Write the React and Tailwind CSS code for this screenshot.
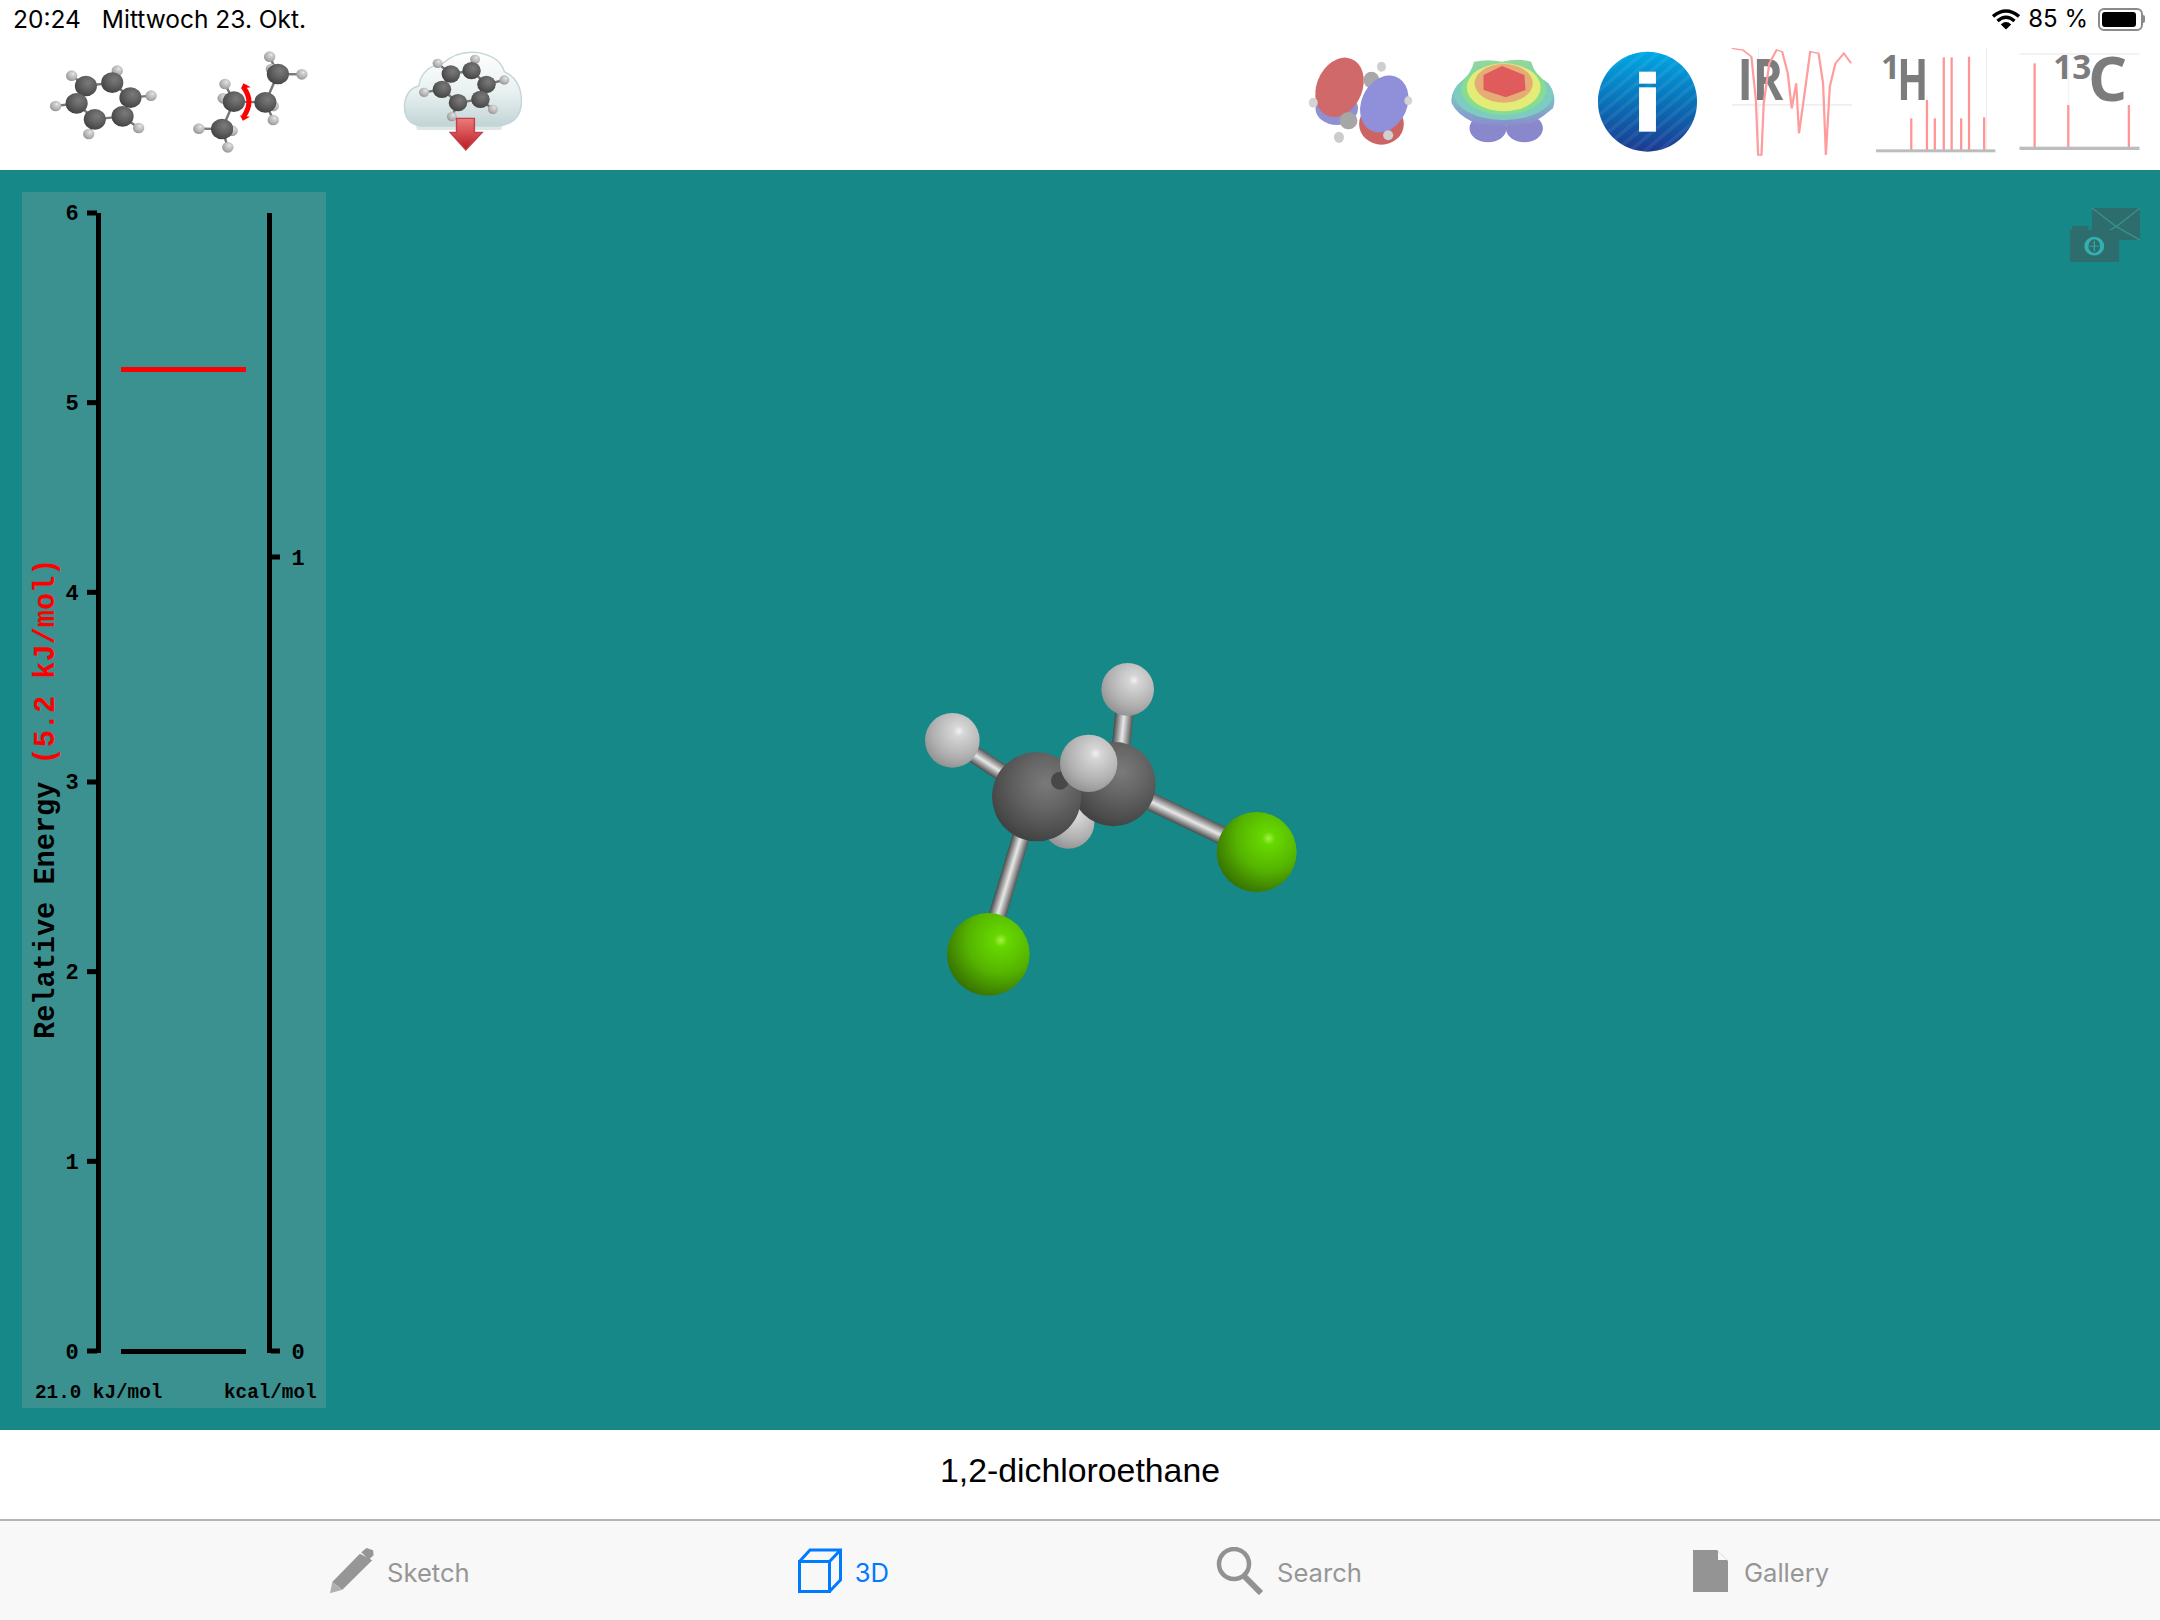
import React from 'react';

const TICKS_KJ = [0, 1, 2, 3, 4, 5, 6];
const Y_ZERO = 1351;
const KJ_STEP = 189.67;

// shared gradients for all the ball and stick drawings
function Gradients() {
  return (
    <svg className="absolute w-0 h-0">
      <defs>
        <radialGradient id="ballC" cx="0.6" cy="0.35" r="0.78">
          <stop offset="0" stopColor="#7a7a7a" />
          <stop offset="0.35" stopColor="#666666" />
          <stop offset="0.7" stopColor="#4e4e4e" />
          <stop offset="1" stopColor="#363636" />
        </radialGradient>
        <radialGradient id="ballH" cx="0.62" cy="0.33" r="0.8">
          <stop offset="0" stopColor="#f2f2f2" />
          <stop offset="0.12" stopColor="#d6d6d6" />
          <stop offset="0.6" stopColor="#b0b0b0" />
          <stop offset="1" stopColor="#868686" />
        </radialGradient>
        <radialGradient id="ballCl" cx="0.65" cy="0.33" r="0.8">
          <stop offset="0" stopColor="#a4f048" />
          <stop offset="0.1" stopColor="#66d800" />
          <stop offset="0.5" stopColor="#55b400" />
          <stop offset="0.8" stopColor="#3f8200" />
          <stop offset="1" stopColor="#2f6600" />
        </radialGradient>
        <linearGradient id="cloudFill" x1="0" y1="0" x2="0" y2="1">
          <stop offset="0" stopColor="#ffffff" />
          <stop offset="0.55" stopColor="#e8f0f0" />
          <stop offset="1" stopColor="#c2d4d6" />
        </linearGradient>
        <linearGradient id="arrowFill" x1="0" y1="0" x2="0" y2="1">
          <stop offset="0" stopColor="#ee7a7a" />
          <stop offset="1" stopColor="#b81c24" />
        </linearGradient>
        <linearGradient id="infoFill" x1="0" y1="0" x2="0" y2="1">
          <stop offset="0" stopColor="#00a8e4" />
          <stop offset="0.55" stopColor="#0a6cb4" />
          <stop offset="1" stopColor="#1c3a90" />
        </linearGradient>
        <linearGradient id="espBase" x1="0" y1="0" x2="0" y2="1">
          <stop offset="0" stopColor="#92d89a" />
          <stop offset="0.5" stopColor="#7cc8c4" />
          <stop offset="1" stopColor="#8a8ecc" />
        </linearGradient>
      </defs>
    </svg>
  );
}

function Bond({ x1, y1, x2, y2, w, id }) {
  const len = Math.hypot(x2 - x1, y2 - y1);
  const nx = (-(y2 - y1) / len) * (w / 2);
  const ny = ((x2 - x1) / len) * (w / 2);
  return (
    <>
      <defs>
        <linearGradient id={id} gradientUnits="userSpaceOnUse" x1={x1 + nx} y1={y1 + ny} x2={x1 - nx} y2={y1 - ny}>
          <stop offset="0" stopColor="#4a4a4a" />
          <stop offset="0.5" stopColor="#e8e8e8" />
          <stop offset="1" stopColor="#555555" />
        </linearGradient>
      </defs>
      <line x1={x1} y1={y1} x2={x2} y2={y2} stroke={`url(#${id})`} strokeWidth={w} />
    </>
  );
}

function Molecule() {
  return (
    <svg className="absolute left-[900px] top-[470px]" width="420" height="380" viewBox="0 0 1260 1140">
      <Bond id="b1" x1={157} y1={301} x2={340} y2={420} w={52} />
      <circle cx="157" cy="301" r="82" fill="url(#ballH)" />
      <Bond id="b2" x1={680} y1={148} x2={655} y2={400} w={55} />
      <circle cx="683" cy="148" r="79" fill="url(#ballH)" />
      <circle cx="505" cy="548" r="78" fill="url(#ballH)" />
      <Bond id="b3" x1={700} y1={460} x2={1070} y2={636} w={55} />
      <circle cx="640" cy="432" r="127" fill="url(#ballC)" />
      <circle cx="1070" cy="636" r="120" fill="url(#ballCl)" />
      <Bond id="b4" x1={390} y1={500} x2={270} y2={900} w={52} />
      <circle cx="410" cy="470" r="134" fill="url(#ballC)" />
      <circle cx="480" cy="422" r="27" fill="#484848" />
      <circle cx="566" cy="370" r="86" fill="url(#ballH)" />
      <circle cx="265" cy="943" r="124" fill="url(#ballCl)" />
    </svg>
  );
}

function EnergyChart() {
  const mono = { fontFamily: '"Liberation Mono", monospace', fontWeight: 700 };
  return (
    <svg className="w-full h-full" viewBox="22 192 304 1216">
      <rect x="96" y="213" width="5" height="1140" fill="#000" />
      <rect x="267" y="213" width="5" height="1140" fill="#000" />
      {TICKS_KJ.map((t) => {
        const y = Y_ZERO - t * KJ_STEP;
        return (
          <g key={t}>
            <rect x="87" y={y - 2.5} width="10" height="5" fill="#000" />
            <text x="72" y={y + 7.5} textAnchor="middle" fontSize="22" style={mono}>{t}</text>
          </g>
        );
      })}
      <rect x="271" y="554.5" width="9" height="5" fill="#000" />
      <text x="298" y="564.5" textAnchor="middle" fontSize="22" style={mono}>1</text>
      <rect x="271" y="1348.5" width="9" height="5" fill="#000" />
      <text x="298" y="1358.5" textAnchor="middle" fontSize="22" style={mono}>0</text>
      <rect x="121" y="367" width="125" height="5" fill="#ff0000" />
      <rect x="121" y="1349" width="125" height="5" fill="#000" />
      <text x="35" y="1398" fontSize="19.3" style={mono}>21.0 kJ/mol</text>
      <text x="224" y="1398" fontSize="19.3" style={mono}>kcal/mol</text>
      <text transform="translate(53.5 1039) rotate(-90)" fontSize="28.6" style={mono}>
        Relative Energy <tspan fill="#ff0000">(5.2 kJ/mol)</tspan>
      </text>
    </svg>
  );
}

// small molecule drawing, coordinates are in the same stretched units as the viewBox
function MiniAtoms({ bonds, carbons, hydrogens, rc = 31, rh = 16 }) {
  return (
    <>
      {bonds.map((b, i) => (
        <line key={i} x1={b[0]} y1={b[1]} x2={b[2]} y2={b[3]} stroke="#777" strokeWidth="7" />
      ))}
      {hydrogens.map((a, i) => (
        <ellipse key={i} cx={a[0]} cy={a[1]} rx={rh} ry={rh} fill="url(#ballH)" />
      ))}
      {carbons.map((a, i) => (
        <ellipse key={i} cx={a[0]} cy={a[1]} rx={rc} ry={rc} fill="url(#ballC)" />
      ))}
    </>
  );
}

const ring = (c, h) => {
  const bonds = [];
  c.forEach((p, i) => {
    const n = c[(i + 1) % c.length];
    bonds.push([p[0], p[1], n[0], n[1]]);
    bonds.push([p[0], p[1], h[i][0], h[i][1]]);
  });
  return bonds;
};

const BENZ_C = [[242, 258], [316, 248], [367, 293], [345, 349], [267, 358], [216, 310]];
const BENZ_H = [[202, 227], [330, 212], [425, 287], [390, 384], [250, 402], [157, 318]];
const CLOUD_C = [[1262, 222], [1320, 212], [1362, 253], [1345, 298], [1282, 308], [1237, 268]];
const CLOUD_H = [[1225, 190], [1330, 178], [1412, 240], [1380, 328], [1265, 350], [1187, 277]];

function BenzeneIcon() {
  return (
    <svg width="114" height="110" viewBox="130 141 320 330" preserveAspectRatio="none">
      <MiniAtoms bonds={ring(BENZ_C, BENZ_H)} carbons={BENZ_C} hydrogens={BENZ_H} />
    </svg>
  );
}

function RotateIcon() {
  const c = [[655, 305], [743, 307], [622, 387], [778, 222]];
  const h = [[630, 252], [625, 295], [557, 386], [650, 392], [638, 442], [755, 170], [760, 207], [845, 223], [765, 360], [765, 318]];
  const bonds = [
    [655, 305, 743, 307], [655, 305, 622, 387], [743, 307, 778, 222],
    [622, 387, 557, 386], [622, 387, 650, 392], [622, 387, 638, 442],
    [778, 222, 755, 170], [778, 222, 760, 207], [778, 222, 845, 223],
    [743, 307, 765, 360], [743, 307, 765, 318], [655, 305, 630, 252], [655, 305, 625, 295],
  ];
  return (
    <svg width="118" height="110" viewBox="535 141 330 330" preserveAspectRatio="none">
      <MiniAtoms bonds={bonds} carbons={c} hydrogens={h} />
      <path d="M682 262 Q712 305 682 350" fill="none" stroke="#ff0000" strokeWidth="14" />
      <polygon points="674,266 682,250 702,262" fill="#ff0000" />
      <polygon points="672,346 680,362 700,350" fill="#ff0000" />
    </svg>
  );
}

function CloudIcon() {
  return (
    <svg width="123" height="110" viewBox="1125 141 345 330" preserveAspectRatio="none">
      <rect x="1165" y="376" width="240" height="14" rx="6" fill="#dfe6e6" />
      <path
        d="M1175 378 Q1130 370 1132 315 Q1136 268 1172 258 Q1180 200 1240 190 Q1280 150 1340 158 Q1400 170 1412 215 Q1462 240 1460 310 Q1455 372 1395 378 Z"
        fill="url(#cloudFill)"
        stroke="#c4d6d8"
        strokeWidth="4"
      />
      <MiniAtoms bonds={ring(CLOUD_C, CLOUD_H)} carbons={CLOUD_C} hydrogens={CLOUD_H} rc={26} rh={14} />
      <polygon
        points="1278,355 1328,355 1328,397 1350,397 1304,450 1260,397 1278,397"
        fill="url(#arrowFill)"
        stroke="#c2404a"
        strokeWidth="4"
      />
    </svg>
  );
}

function OrbitalIcon() {
  return (
    <svg width="109" height="110" viewBox="45 141 195 330" preserveAspectRatio="none">
      <ellipse cx="100" cy="325" rx="38" ry="50" fill="#8f8fd4" />
      <ellipse cx="180" cy="372" rx="40" ry="62" fill="#cc6464" />
      <ellipse cx="105" cy="262" rx="42" ry="90" fill="#d06a6a" transform="rotate(8 105 262)" />
      <ellipse cx="180" cy="200" rx="8" ry="15" fill="#cfcfcf" />
      <ellipse cx="162" cy="240" rx="14" ry="25" fill="#a8a8a8" />
      <ellipse cx="185" cy="312" rx="42" ry="86" fill="#9090da" transform="rotate(8 185 312)" />
      <ellipse cx="121" cy="362" rx="16" ry="26" fill="#a6a6a6" />
      <ellipse cx="58" cy="308" rx="8" ry="15" fill="#d4d4d4" />
      <ellipse cx="228" cy="302" rx="7" ry="13" fill="#d4d4d4" />
      <ellipse cx="104" cy="412" rx="9" ry="17" fill="#cccccc" />
      <ellipse cx="192" cy="406" rx="9" ry="15" fill="#d0d0d0" />
    </svg>
  );
}

function PotentialIcon() {
  return (
    <svg width="112" height="110" viewBox="295 141 200 330" preserveAspectRatio="none">
      <ellipse cx="370" cy="385" rx="33" ry="42" fill="#8a88cc" />
      <ellipse cx="435" cy="385" rx="33" ry="42" fill="#8a88cc" />
      <path
        d="M345 185 Q370 176 395 185 Q425 174 447 185 Q455 230 478 250 Q494 290 486 325 Q468 352 450 368 Q400 384 345 368 Q315 345 305 310 Q302 270 325 240 Q340 220 345 185 Z"
        fill="url(#espBase)"
      />
      <ellipse cx="398" cy="284" rx="88" ry="76" fill="#7ccdc0" />
      <ellipse cx="398" cy="268" rx="76" ry="76" fill="#86dc90" />
      <ellipse cx="398" cy="262" rx="66" ry="72" fill="#e4ec78" />
      <ellipse cx="398" cy="250" rx="52" ry="58" fill="#e6ac76" />
      <polygon points="362,225 395,198 435,225 437,270 402,292 362,270" fill="#e05c5c" />
    </svg>
  );
}

function InfoIcon() {
  return (
    <svg width="107" height="110" viewBox="560 141 190 330" preserveAspectRatio="none">
      <defs>
        <pattern id="infoStripes" width="26" height="44" patternUnits="userSpaceOnUse" patternTransform="skewX(-35)">
          <rect width="10" height="44" fill="#ffffff" fillOpacity="0.07" />
        </pattern>
      </defs>
      <ellipse cx="655" cy="305" rx="88" ry="150" fill="url(#infoFill)" />
      <ellipse cx="655" cy="305" rx="88" ry="150" fill="url(#infoStripes)" />
      <rect x="640" y="215" width="30" height="36" fill="#ffffff" />
      <rect x="640" y="262" width="30" height="133" fill="#ffffff" />
    </svg>
  );
}

// the viewBox is squeezed in x, sx flattens the labels back
function SpectrumLabel({ x, y, size, sx = 0.594, children }) {
  return (
    <text
      transform={`translate(${x} ${y}) scale(${sx} 1)`}
      fontSize={size}
      fontWeight="700"
      fill="#7c7c7c"
      style={{ fontFamily: '"Open Sans", sans-serif' }}
    >
      {children}
    </text>
  );
}

function IrIcon() {
  return (
    <svg className="overflow-visible" width="126" height="110" viewBox="800 141 225 330" preserveAspectRatio="none">
      <rect x="805" y="312" width="215" height="5" fill="#eeeeee" />
      <rect x="852" y="145" width="2" height="320" fill="#f0f0f0" />
      <SpectrumLabel x={815} y={300} size={172} sx={0.48}>IR</SpectrumLabel>
      <polyline
        points="805,145 825,150 840,170 848,300 852,465 858,465 862,310 872,190 885,150 895,155 905,220 912,325 920,250 925,400 935,280 945,155 960,160 968,250 973,465 980,260 990,190 1005,160 1018,190"
        fill="none"
        stroke="#ff9c9c"
        strokeWidth="4"
      />
    </svg>
  );
}

function ProtonIcon() {
  const peaks = [[1125, 355], [1153, 300], [1167, 355], [1183, 172], [1197, 172], [1214, 355], [1228, 170], [1255, 352]];
  return (
    <svg className="overflow-visible" width="129" height="110" viewBox="1055 141 230 330" preserveAspectRatio="none">
      <rect x="1258" y="145" width="2" height="307" fill="#eeeeee" />
      <SpectrumLabel x={1071} y={238} size={100}>1</SpectrumLabel>
      <SpectrumLabel x={1100} y={300} size={172} sx={0.42}>H</SpectrumLabel>
      {peaks.map((p) => (
        <rect key={p[0]} x={p[0] - 2} y={p[1]} width="4" height={452 - p[1]} fill="#ff9494" />
      ))}
      <rect x="1062" y="448" width="213" height="9" fill="#bdbdbd" />
    </svg>
  );
}

function CarbonIcon() {
  const peaks = [[1345, 190], [1405, 315], [1513, 315]];
  return (
    <svg className="overflow-visible" width="129" height="110" viewBox="1310 141 230 330" preserveAspectRatio="none">
      <rect x="1318" y="160" width="214" height="4" fill="#eeeeee" />
      <rect x="1404" y="165" width="2" height="150" fill="#f2f2f2" />
      <SpectrumLabel x={1378} y={238} size={100}>13</SpectrumLabel>
      <SpectrumLabel x={1440} y={302} size={185}>C</SpectrumLabel>
      {peaks.map((p) => (
        <rect key={p[0]} x={p[0] - 2} y={p[1]} width="4" height={445 - p[1]} fill="#ff9494" />
      ))}
      <rect x="1318" y="440" width="214" height="10" fill="#bdbdbd" />
    </svg>
  );
}

function CameraMailIcon() {
  return (
    <svg className="absolute right-[20px] top-[38px]" width="70" height="54" viewBox="1408 625 124 160" preserveAspectRatio="none">
      <rect x="1447" y="625" width="85" height="95" fill="#2e6d6d" />
      <path d="M1447 625 L1490 680 L1532 625 M1447 720 L1490 680 L1532 720" fill="none" stroke="#3a9090" strokeWidth="3" />
      <rect x="1408" y="690" width="87" height="95" fill="#2e6d6d" />
      <rect x="1412" y="678" width="28" height="14" fill="#2e6d6d" />
      <ellipse cx="1451" cy="738" rx="14" ry="24" fill="none" stroke="#35b0b0" strokeWidth="7" />
      <path d="M1451 722 V754 M1442 738 H1460" stroke="#35b0b0" strokeWidth="2" />
    </svg>
  );
}

function WifiIcon() {
  return (
    <svg width="28" height="21" viewBox="0 0 28 21">
      <path d="M1 7.5 Q14 -3.5 27 7.5" fill="none" stroke="#000" strokeWidth="3.4" />
      <path d="M5.5 12 Q14 4.5 22.5 12" fill="none" stroke="#000" strokeWidth="3.4" />
      <path d="M14 20.5 L8.8 15.4 Q14 10.8 19.2 15.4 Z" fill="#000" />
    </svg>
  );
}

function TabItem({ label, active, gap = 'gap-[13px]', children }) {
  return (
    <div className={`flex items-center ${gap}`}>
      {children}
      <span className={`pt-[4px] text-[25.6px] leading-none ${active ? 'text-[#007aff]' : 'text-[#969696]'}`}>{label}</span>
    </div>
  );
}

export default function App() {
  return (
    <div className="relative w-[2160px] h-[1620px] bg-white overflow-hidden font-['Inter',sans-serif]">
      <Gradients />

      {/* Status bar */}
      <div className="flex items-center h-[38px] pl-[13px] pr-[15px] text-[24px] text-black">
        <span className="text-[24.5px]">20:24</span>
        <span className="ml-[21px] text-[24.5px]">Mittwoch 23. Okt.</span>
        <div className="ml-auto flex items-center">
          <WifiIcon />
          <span className="ml-[8px]">85 %</span>
          <div className="ml-[10px] flex items-center">
            <div className="w-[45px] h-[23px] rounded-[6px] border-2 border-[#8a8a8a] p-[2px]">
              <div className="w-[34px] h-full rounded-[3px] bg-black" />
            </div>
            <div className="w-[2px] h-[8px] bg-[#8a8a8a] rounded-r-sm" />
          </div>
        </div>
      </div>

      {/* Toolbar */}
      <div className="flex items-start h-[132px] pt-[9px] pl-[46px] pr-[16px]">
        <BenzeneIcon />
        <div className="ml-[31px]"><RotateIcon /></div>
        <div className="ml-[93px]"><CloudIcon /></div>
        <div className="ml-auto"><OrbitalIcon /></div>
        <div className="ml-[31px]"><PotentialIcon /></div>
        <div className="ml-[36px]"><InfoIcon /></div>
        <div className="ml-[28px]"><IrIcon /></div>
        <div className="ml-[17px]"><ProtonIcon /></div>
        <div className="ml-[14px]"><CarbonIcon /></div>
      </div>

      {/* 3D view */}
      <div className="relative h-[1260px] bg-[#168888] pt-[22px] pl-[22px]">
        <div className="w-[304px] h-[1216px] bg-[#3b9090]">
          <EnergyChart />
        </div>
        <Molecule />
        <CameraMailIcon />
      </div>

      {/* Molecule name */}
      <div className="flex items-center justify-center h-[89px] pb-[8px] text-[33.8px] text-black font-['Liberation_Sans',sans-serif]">
        1,2-dichloroethane
      </div>

      {/* Tab bar */}
      <div className="flex items-center h-[101px] pl-[330px] bg-[#f8f8f8] border-t-2 border-[#b4b4b4]">
        <TabItem label="Sketch">
          <svg width="44" height="46" viewBox="67 143 100 138" preserveAspectRatio="none">
            <polygon points="72,245 135,160 163,180 95,268" fill="#969696" />
            <polygon points="138,156 150,143 165,150 166,165 155,178" fill="#969696" />
            <polygon points="72,245 67,279 95,268" fill="#b0b0b0" />
          </svg>
        </TabItem>
        <div className="ml-[328px]">
          <TabItem label="3D" active>
            <svg width="44" height="46" viewBox="0 0 44 46" fill="none" stroke="#007aff" strokeWidth="3">
              <rect x="1.5" y="13.5" width="30" height="30" />
              <path d="M1.5 13.5 L12 2 H42.5 V32 L31.5 43.5 M31.5 13.5 L42.5 2" />
            </svg>
          </TabItem>
        </div>
        <div className="ml-[327px]">
          <TabItem label="Search">
            <svg width="48" height="48" viewBox="0 0 48 48" fill="none" stroke="#929292">
              <circle cx="18" cy="17" r="15" strokeWidth="4.5" />
              <line x1="28" y1="29" x2="45" y2="46" strokeWidth="6" />
            </svg>
          </TabItem>
        </div>
        <div className="ml-[331px]">
          <TabItem label="Gallery" gap="gap-[16px]">
            <svg width="35" height="42" viewBox="0 0 35 42">
              <polygon points="0,0 24,0 35,11 35,42 0,42" fill="#949494" />
              <polygon points="25,1 34,10 25,10" fill="#f8f8f8" />
            </svg>
          </TabItem>
        </div>
      </div>
    </div>
  );
}
